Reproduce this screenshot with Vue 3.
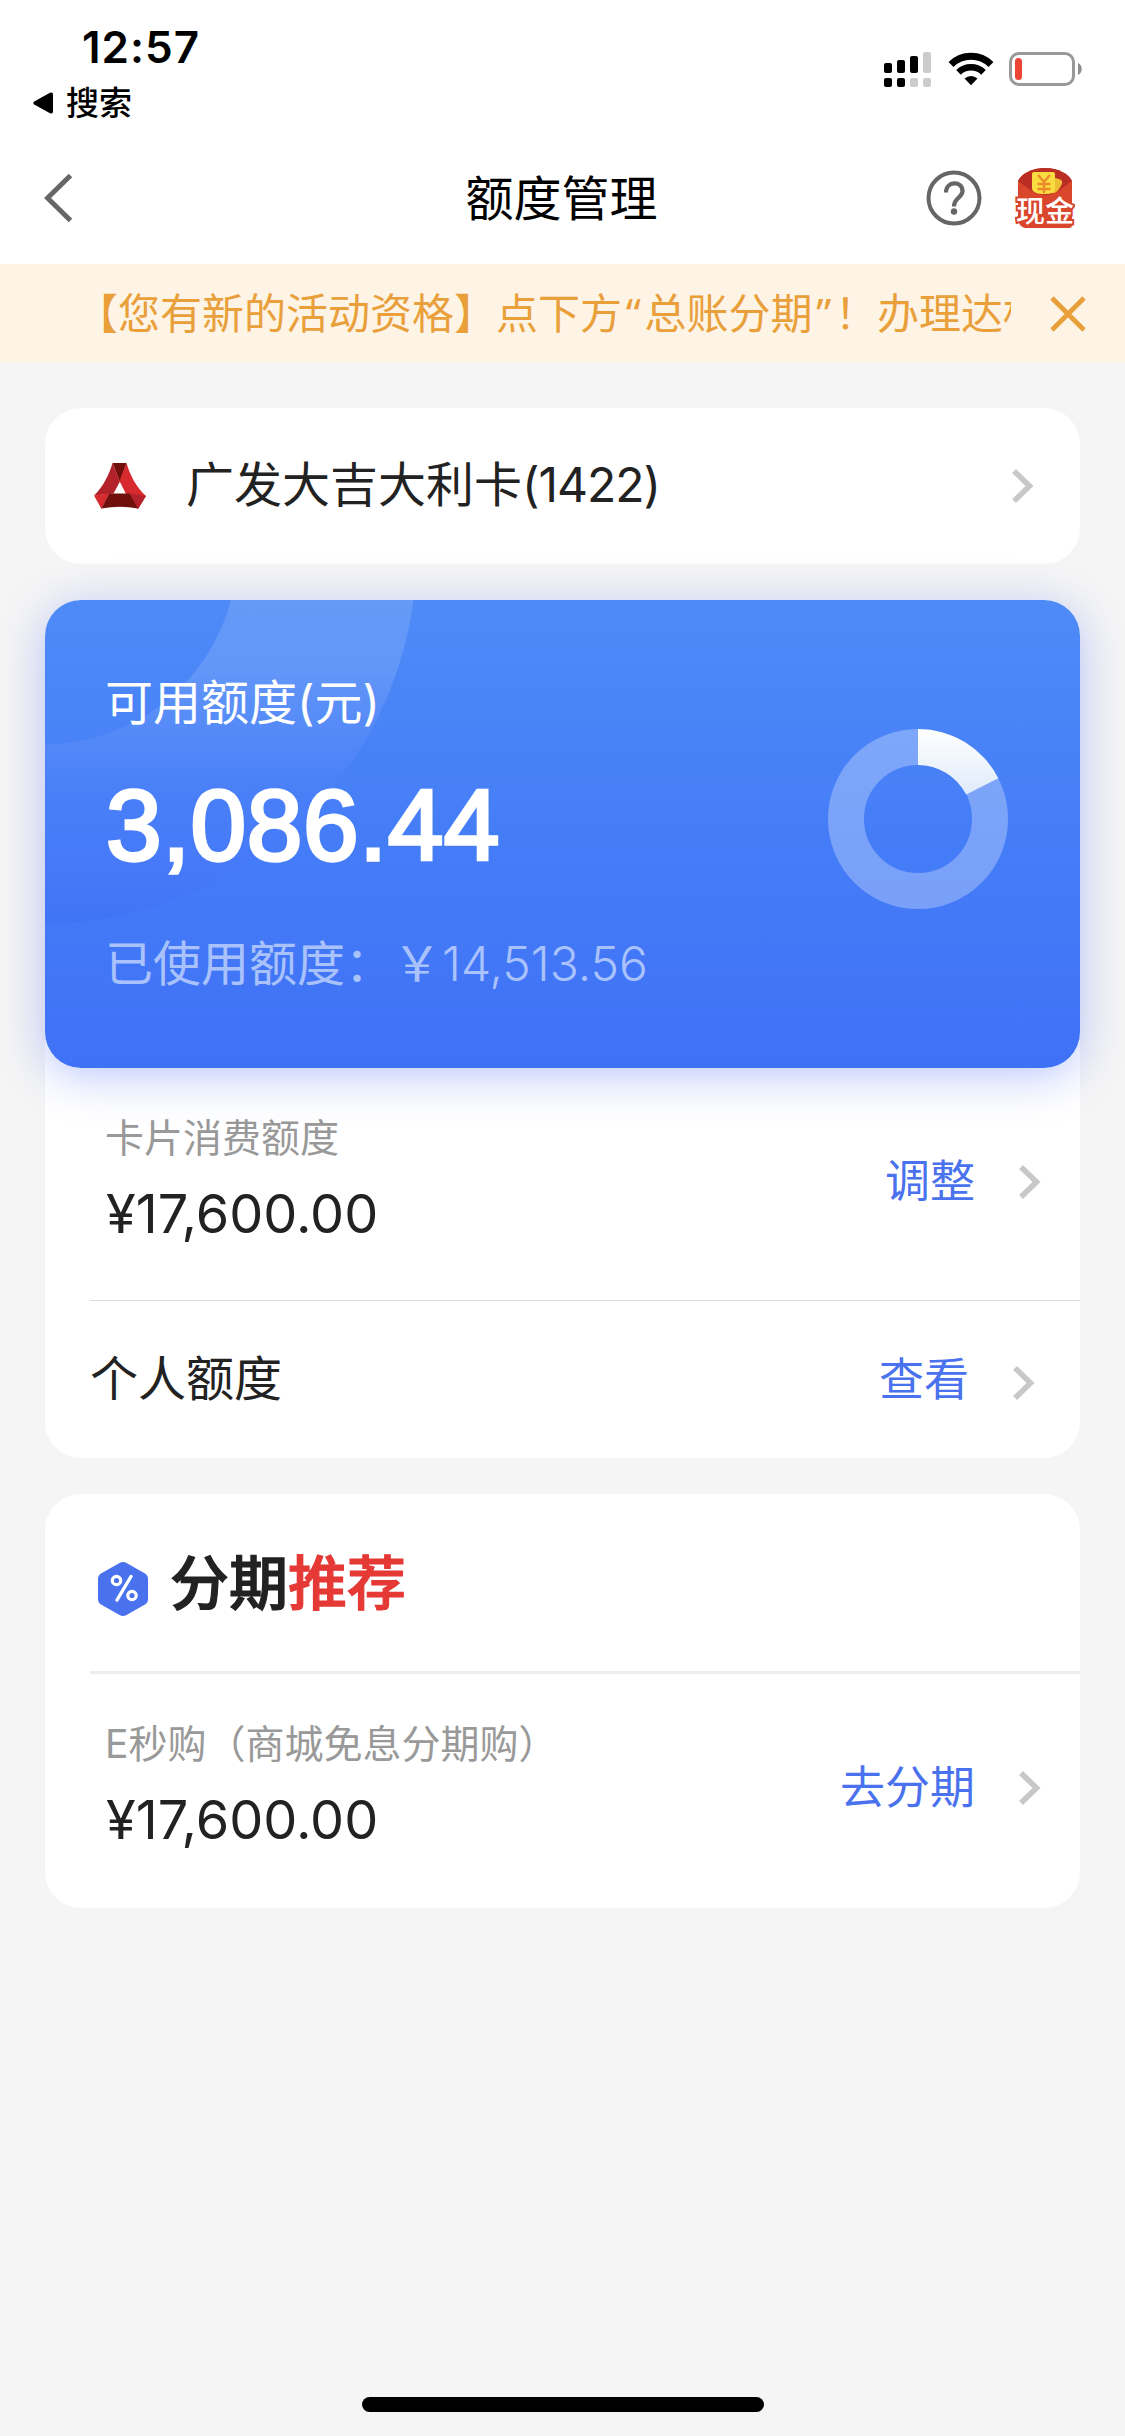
<script setup>
import { h } from 'vue'

const total = 17600
const available = 3086.44

const money = (n) =>
  n.toLocaleString('en-US', { minimumFractionDigits: 2, maximumFractionDigits: 2 })

// End point of the highlighted donut slice, clockwise from twelve o'clock.
const angle = (available / total) * Math.PI * 2
const point = (r) => `${90 + r * Math.sin(angle)} ${90 - r * Math.cos(angle)}`
const slice = `M90 0A90 90 0 0 1 ${point(90)}L${point(54)}A54 54 0 0 0 90 36Z`

const Chevron = () =>
  h('svg', { width: 22, height: 34, viewBox: '0 0 22 34', fill: 'none' }, [
    h('path', { d: 'M2 2 17.5 17 2 32', stroke: '#c8c8ca', 'stroke-width': 5.6 }),
  ])

const signal = [
  { h: 10, on: true, dot: true },
  { h: 13, on: true, dot: true },
  { h: 17, on: true, dot: false },
  { h: 21, on: false, dot: false },
]
</script>

<template>
  <div class="screen">
    <header class="status">
      <div class="status-left">
        <div class="time">12:57</div>
        <div class="return">
          <svg width="20" height="22" viewBox="0 0 20 22"><path d="M1.2 9.6 17 .7Q20 -.4 20 2.500V19.500Q20 22.400 17 21.300L1.200 12.400Q-.6 11 1.200 9.600Z" /></svg>
          <span>搜索</span>
        </div>
      </div>
      <div class="status-right">
        <svg width="48" height="36" viewBox="0 0 48 36">
          <g v-for="(s, i) in signal" :key="i">
            <rect :x="i * 13" :y="21 - s.h" width="8" :height="s.h" rx="2" :fill="s.on ? '#000' : '#ccc'" />
            <rect :x="i * 13" y="26" width="8" height="9" rx="2" :fill="s.dot ? '#000' : '#ccc'" />
          </g>
        </svg>
        <svg class="wifi" width="46" height="34" viewBox="0 0 46 34">
          <path d="M3 12.500A28.500 28.500 0 0 1 43 12.500" fill="none" stroke="#000" stroke-width="7" />
          <path d="M10.500 20.300A18 18 0 0 1 35.500 20.300" fill="none" stroke="#000" stroke-width="6.500" />
          <path d="M16.500 26.600A9.500 9.500 0 0 1 29.500 26.600L23 33.200Z" />
        </svg>
        <svg class="battery" width="74" height="34" viewBox="0 0 74 34">
          <rect x="1.500" y="1.500" width="63" height="31" rx="8.500" fill="none" stroke="#999" stroke-width="3" />
          <rect x="6" y="6" width="7" height="22" rx="3.500" fill="#ec4535" />
          <path d="M69 11C74 13 74 21 69 23Z" fill="#8e8e8e" />
        </svg>
      </div>
    </header>

    <nav class="nav">
      <div class="nav-side">
        <svg width="30" height="50" viewBox="0 0 30 50"><path d="M26.500 2.500 3.500 25 26.500 47.500" fill="none" stroke="#666" stroke-width="5" /></svg>
      </div>
      <h1>额度管理</h1>
      <div class="nav-side nav-tools">
        <svg width="56" height="56" viewBox="0 0 56 56" fill="none" stroke="#666">
          <circle cx="28" cy="28" r="25.500" stroke-width="4" />
          <path d="M20 22.500C20 10.500 36.500 10.500 36.500 21C36.500 28 28 27.500 28 36.500" stroke-width="4.200" />
          <circle cx="28" cy="41.500" r="3.200" fill="#666" stroke="none" />
        </svg>
        <svg width="60" height="60" viewBox="0 0 60 60">
          <path d="M3 13C6 6 17 0 30 0S54 6 57 13V57Q57 60 54 60H10Q3 58 3 50Z" fill="#d9462c" />
          <path d="M3 13C6 6 17 0 30 0S54 6 57 13L42 24Q30 30 18 24Z" fill="#b92d22" />
          <path d="M37 9 44 11Q48 12 47 16L44 21Q41 26 36 25Z" fill="#efbd35" />
          <path d="M19 4H38Q40 4 40 6V21Q40 26 30 26Q17 26 17 20V6Q17 4 19 4Z" fill="#f9dc3f" />
          <path d="M23 7 29 14 35 7M29 14V25M22.500 16H35.500M22.500 21H35.500" fill="none" stroke="#eb8a2b" stroke-width="2.400" />
          <text x="30" y="54" text-anchor="middle" class="cash">现金</text>
        </svg>
      </div>
    </nav>

    <div class="notice">
      <div class="notice-text">【您有新的活动资格】点下方<span class="quote">“</span>总账分期<span class="quote">”</span>！办理达标</div>
      <svg width="36" height="36" viewBox="0 0 36 36"><path d="M2 2 34 34M34 2 2 34" stroke="#e9a03b" stroke-width="4.800" /></svg>
    </div>

    <main>
      <section class="card account">
        <svg class="logo" width="52" height="46" viewBox="0 0 52 46">
          <path d="M18.500 0H32.500L26 19Z" fill="#6f100c" />
          <path d="M18.500 0 26 18.500 19.500 30.500 0 32.500C9 24 15 12 18.500 0Z" fill="#b3222a" />
          <path d="M32.500 0C36 12 42 24 52 33L44 46 32 31 25.500 18Z" fill="#d62a2e" />
          <path d="M0 32.500 15 30.500 7.500 46Z" fill="#d62a2e" />
          <path d="M35.500 30.500 52 33 44 46Z" fill="#b3222a" />
          <path d="M15 30.500H35.500L44 45.500Q26 42 7.500 45.500Z" fill="#6f100c" />
        </svg>
        <div class="account-name">广发大吉大利卡<span class="tail">(1422)</span></div>
        <Chevron />
      </section>

      <section class="card limits">
        <div class="hero">
          <svg class="arc" width="420" height="330" viewBox="0 0 420 330">
            <defs>
              <linearGradient id="arc" x1="0" y1="0" x2="0" y2="1">
                <stop offset="0" stop-color="#fff" stop-opacity=".13" />
                <stop offset=".22" stop-color="#fff" stop-opacity=".13" />
                <stop offset=".62" stop-color="#5d7bff" stop-opacity=".08" />
                <stop offset="1" stop-color="#3a6cf5" stop-opacity=".35" />
              </linearGradient>
            </defs>
            <path d="M186 0A192 192 0 0 1 0 144V323.500A371.500 371.500 0 0 0 368.500 0Z" fill="url(#arc)" />
          </svg>
          <div class="hero-body">
            <div class="hero-label">可用额度(元)</div>
            <div class="hero-amount">{{ money(available) }}</div>
            <div class="hero-used">已使用额度：￥<span class="used-sum">{{ money(total - available) }}</span></div>
          </div>
          <svg class="donut" width="180" height="180" viewBox="0 0 180 180">
            <defs>
              <linearGradient id="slice" x1="0" y1="0" x2="0" y2="1">
                <stop offset="0" stop-color="#fff" />
                <stop offset="1" stop-color="#e0ebfa" />
              </linearGradient>
            </defs>
            <circle cx="90" cy="90" r="72" fill="none" stroke="#fff" stroke-opacity=".29" stroke-width="36" />
            <path :d="slice" fill="url(#slice)" />
          </svg>
        </div>

        <div class="row spend">
          <div class="row-main">
            <div class="caption">卡片消费额度</div>
            <div class="amount">¥{{ money(total) }}</div>
          </div>
          <a class="link">调整</a>
          <Chevron />
        </div>
        <div class="line"></div>
        <div class="row personal">
          <div class="row-main title">个人额度</div>
          <a class="link">查看</a>
          <Chevron />
        </div>
      </section>

      <section class="card plans">
        <div class="plans-head">
          <svg width="50" height="54" viewBox="0 0 50 54">
            <path d="M21.500 1Q25 -1 28.500 1L47 11.500Q50 13.500 50 17V37Q50 40.500 47 42.500L28.500 53Q25 55 21.500 53L3 42.500Q0 40.500 0 37V17Q0 13.500 3 11.500Z" fill="#4a72ef" />
            <g fill="none" stroke="#fff">
              <circle cx="18.500" cy="18.500" r="4.200" stroke-width="3.200" />
              <circle cx="34" cy="33.500" r="4.200" stroke-width="3.200" />
              <path d="M33 14.500 19 38" stroke-width="3.400" stroke-linecap="round" />
            </g>
          </svg>
          <h2>分期<em>推荐</em></h2>
        </div>
        <div class="line thick"></div>
        <div class="row installment">
          <div class="row-main">
            <div class="caption">E秒购（商城免息分期购）</div>
            <div class="amount">¥{{ money(total) }}</div>
          </div>
          <a class="link">去分期</a>
          <Chevron />
        </div>
      </section>
    </main>

    <div class="home"></div>
  </div>
</template>

<style>
body {
  background: #f5f5f5;
}
</style>

<style scoped>
.screen {
  box-sizing: border-box;
  width: 1125px;
  height: 2436px;
  display: flex;
  flex-direction: column;
  overflow: hidden;
  background: #f5f5f5;
  color: #222;
  font-family: Inter, "Noto Sans CJK SC", sans-serif;
  white-space: nowrap;
}
svg {
  display: block;
  flex: none;
}
.status {
  height: 132px;
  display: flex;
  justify-content: space-between;
  background: #fff;
  color: #000;
}
.time {
  margin: 20px 0 0 82px;
  font-size: 44px;
  line-height: 54px;
  font-weight: 600;
  letter-spacing: 1px;
}
.return {
  display: flex;
  align-items: center;
  gap: 13px;
  margin: 9px 0 0 33px;
  font-size: 33px;
  line-height: 40px;
  font-weight: 500;
}
.status-right {
  display: flex;
  padding: 52px 42px 0 0;
}
.wifi {
  margin-left: 16px;
}
.battery {
  margin-left: 15px;
}
.nav {
  height: 132px;
  display: flex;
  align-items: center;
  justify-content: space-between;
  background: #fff;
}
.nav-side {
  box-sizing: border-box;
  width: 250px;
  padding-left: 44px;
}
.nav-tools {
  display: flex;
  justify-content: flex-end;
  align-items: center;
  gap: 33px;
  padding: 0 50px 0 0;
}
.cash {
  font-size: 29px;
  font-weight: 500;
  fill: #fff;
  stroke: #d9462c;
  stroke-width: 4px;
  paint-order: stroke;
}
h1 {
  margin: 0;
  padding: 1px 2px 0 0;
  font-size: 48px;
  line-height: 60px;
  font-weight: 400;
  color: #000;
}
.notice {
  height: 99px;
  display: flex;
  align-items: center;
  justify-content: space-between;
  padding: 0 39px 0 76px;
  background: #fdf4e6;
  color: #e9a03b;
}
.notice-text {
  width: 935px;
  overflow: hidden;
  font-size: 42px;
  line-height: 60px;
}
.quote {
  display: inline-block;
  width: 22.5px;
  font-family: "Noto Sans", sans-serif;
  text-align: center;
  line-height: 1;
}
main {
  display: flex;
  flex-direction: column;
  gap: 36px;
  padding: 45px 45px 0;
}
.card {
  border-radius: 36px;
  background: #fff;
}
.account {
  height: 156px;
  display: flex;
  align-items: center;
  padding: 0 46px 0 49px;
}
.account-name {
  flex: 1;
  margin: -2px 0 0 40px;
  font-size: 48px;
  line-height: 60px;
}
.tail {
  letter-spacing: -1px;
}
.limits {
  height: 858px;
}
.hero {
  position: relative;
  height: 468px;
  display: flex;
  justify-content: space-between;
  border-radius: 36px;
  background: linear-gradient(#4e8bf7, #457df7 50%, #3f71f6);
  box-shadow: 0 8px 45px rgba(63, 100, 247, 0.36);
  color: #fff;
  overflow: hidden;
}
.arc {
  position: absolute;
  left: 0;
  top: 0;
}
.hero-body {
  position: relative;
  padding: 73px 0 0 60px;
}
.hero-label {
  font-size: 48px;
  line-height: 60px;
}
.hero-amount {
  margin: 32px 0 0 1px;
  font-family: "Liberation Sans", sans-serif;
  font-size: 100px;
  line-height: 120px;
  letter-spacing: 0.6px;
  -webkit-text-stroke: 3.4px #fff;
}
.hero-used {
  margin-top: 49px;
  font-size: 48px;
  line-height: 60px;
  color: #a9c2fc;
}
.used-sum {
  margin-left: 1px;
  font-weight: 350;
}
.donut {
  margin: 129px 72px 0 0;
}
.row {
  display: flex;
}
.row-main {
  flex: 1;
}
.spend {
  height: 232px;
  padding: 0 39px 0 60px;
}
.installment {
  padding: 0 39px 0 60px;
}
.caption {
  font-size: 39px;
  line-height: 50px;
  color: #999;
}
.amount {
  margin: 21px 0 0 1px;
  font-size: 54px;
  line-height: 60px;
}
.link {
  margin-right: 44px;
  font-size: 45px;
  line-height: 60px;
  color: #4a72ee;
}
.spend .caption {
  margin-top: 45px;
}
.spend .link {
  margin-top: 84px;
}
.spend svg {
  margin-top: 97px;
}
.line {
  height: 1px;
  margin-left: 45px;
  background: #dcdcdc;
}
.line.thick {
  height: 3px;
  background: #eee;
}
.personal {
  padding: 48px 45px 0;
}
.title {
  font-size: 48px;
  line-height: 60px;
}
.personal .link {
  margin-top: 1px;
}
.personal svg {
  margin-top: 17px;
}
.plans {
  height: 414px;
}
.plans-head {
  height: 177px;
  display: flex;
  padding-left: 53px;
}
.plans-head svg {
  margin-top: 68px;
}
h2 {
  margin: 55px 0 0 22px;
  font-size: 59px;
  line-height: 70px;
  font-weight: 500;
  -webkit-text-stroke: 1.2px currentColor;
}
em {
  font-style: normal;
  color: #e53935;
  -webkit-text-stroke-color: #e53935;
}
.installment .caption {
  margin-top: 45px;
}
.installment .link {
  margin-top: 84px;
}
.installment svg {
  margin-top: 97px;
}
.home {
  width: 402px;
  height: 15px;
  margin: auto auto 24px;
  border-radius: 8px;
  background: #000;
}
</style>
